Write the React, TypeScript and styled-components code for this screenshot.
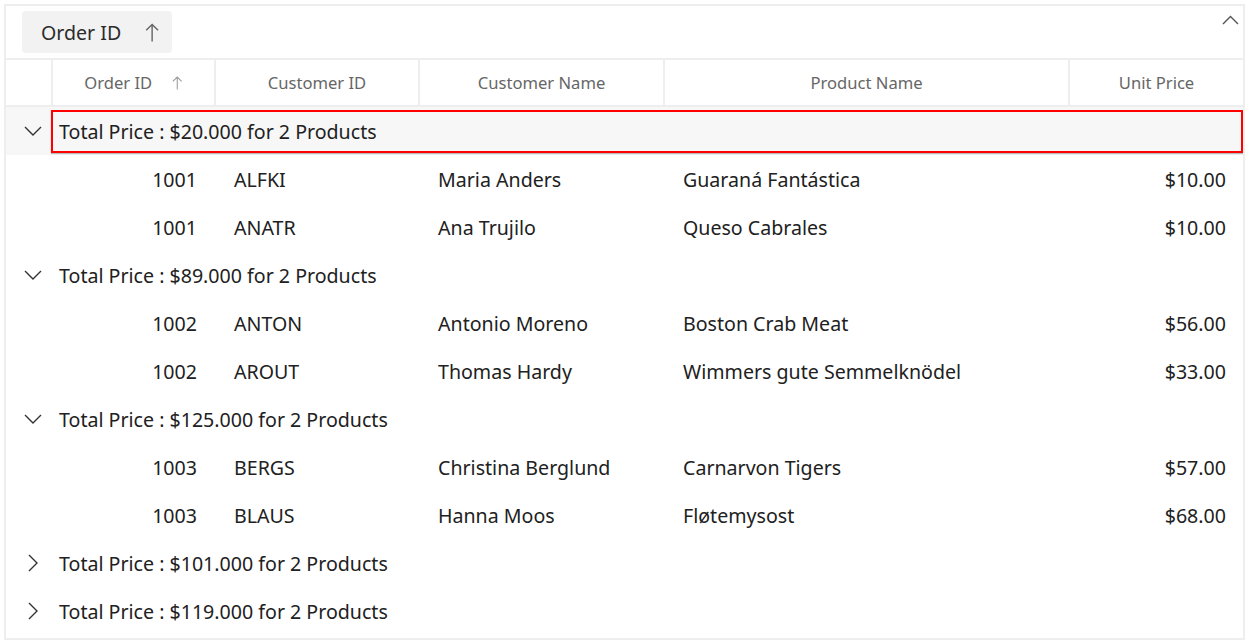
import React from "react";
import styled, { createGlobalStyle } from "styled-components";

const GlobalStyle = createGlobalStyle`
  html, body { margin: 0; padding: 0; background: #ffffff; }
  body { font-family: "Segoe UI", "Noto Sans", "Open Sans", sans-serif; }
`;

const COLS = "45px 163px 204px 245px 405px 175px";

const Grid = styled.div`
  margin: 4px 0 0 4px;
  width: 1241px;
  height: 636px;
  box-sizing: border-box;
  border: 2px solid #eeeeee;
  display: flex;
  flex-direction: column;
  overflow: hidden;
`;

const GroupDropArea = styled.div`
  height: 52px;
  border-bottom: 2px solid #eeeeee;
  display: flex;
  align-items: center;
  justify-content: space-between;
  padding: 0 3px 0 16px;
  box-sizing: content-box;
`;

const GroupChip = styled.div`
  display: flex;
  align-items: center;
  height: 42px;
  width: 150px;
  box-sizing: border-box;
  padding: 0 10px 0 19px;
  gap: 24px;
  background: #f2f2f2;
  border-radius: 4px;
  font-size: 19.6px;
  color: #2b2b2b;
`;

const CollapseButton = styled.div`
  align-self: flex-start;
  margin-top: 9px;
  width: 18px;
  height: 12px;
  display: flex;
`;

const HeaderRow = styled.div`
  display: grid;
  grid-template-columns: ${COLS};
  height: 45px;
  border-bottom: 2px solid #eeeeee;
`;

const HeaderCell = styled.div<{ $first?: boolean }>`
  display: flex;
  align-items: center;
  justify-content: center;
  gap: 20px;
  font-size: 16.6px;
  color: #666666;
  border-left: ${(p) => (p.$first ? "none" : "2px solid #eeeeee")};
`;

const Row = styled.div<{ $selected?: boolean }>`
  display: grid;
  grid-template-columns: ${COLS};
  height: 48px;
  background: ${(p) => (p.$selected ? "#f7f7f7" : "#ffffff")};
  font-size: 19.6px;
  color: #212121;
`;

const ExpanderCell = styled.div`
  display: flex;
  align-items: center;
  justify-content: center;
  padding-left: 8px;
`;

const Caption = styled.div<{ $focused?: boolean }>`
  grid-column: 2 / -1;
  position: relative;
  display: flex;
  align-items: center;
  padding-left: 8px;
  &::after {
    content: "";
    display: ${(p) => (p.$focused ? "block" : "none")};
    position: absolute;
    left: 0;
    right: 0;
    top: 3px;
    bottom: 2px;
    border: 2px solid #ff0000;
    box-shadow: 0 1px 1px rgba(0, 0, 0, 0.25);
  }
`;

const Cell = styled.div<{ $align?: "left" | "right" }>`
  display: flex;
  align-items: center;
  justify-content: ${(p) => (p.$align === "right" ? "flex-end" : "flex-start")};
  padding: 0 17px 0 20px;
  white-space: nowrap;
`;

const ArrowUp = ({ color, size }: { color: string; size: number }) => (
  <svg width={size * 0.75} height={size} viewBox="0 0 12 16" fill="none">
    <path d="M6 15.5V1.2M1 6.2L6 1.2L11 6.2" stroke={color} strokeWidth="1.2" />
  </svg>
);

const ChevronDown = () => (
  <svg width="18" height="10" viewBox="0 0 18 10" fill="none">
    <path d="M1 1L9 9L17 1" stroke="#333" strokeWidth="1.4" />
  </svg>
);

const ChevronRight = () => (
  <svg width="10" height="18" viewBox="0 0 10 18" fill="none">
    <path d="M1 1L9 9L1 17" stroke="#333" strokeWidth="1.4" />
  </svg>
);

const ChevronUp = () => (
  <svg width="17" height="10" viewBox="0 0 17 10" fill="none">
    <path d="M1 9L8.5 1.5L16 9" stroke="#555" strokeWidth="1.4" />
  </svg>
);

type Item = { id: number; cust: string; name: string; product: string; price: string };
type Group = { caption: string; expanded: boolean; items: Item[] };

const groups: Group[] = [
  {
    caption: "Total Price : $20.000 for 2 Products",
    expanded: true,
    items: [
      { id: 1001, cust: "ALFKI", name: "Maria Anders", product: "Guaraná Fantástica", price: "$10.00" },
      { id: 1001, cust: "ANATR", name: "Ana Trujilo", product: "Queso Cabrales", price: "$10.00" },
    ],
  },
  {
    caption: "Total Price : $89.000 for 2 Products",
    expanded: true,
    items: [
      { id: 1002, cust: "ANTON", name: "Antonio Moreno", product: "Boston Crab Meat", price: "$56.00" },
      { id: 1002, cust: "AROUT", name: "Thomas Hardy", product: "Wimmers gute Semmelknödel", price: "$33.00" },
    ],
  },
  {
    caption: "Total Price : $125.000 for 2 Products",
    expanded: true,
    items: [
      { id: 1003, cust: "BERGS", name: "Christina Berglund", product: "Carnarvon Tigers", price: "$57.00" },
      { id: 1003, cust: "BLAUS", name: "Hanna Moos", product: "Fløtemysost", price: "$68.00" },
    ],
  },
  { caption: "Total Price : $101.000 for 2 Products", expanded: false, items: [] },
  { caption: "Total Price : $119.000 for 2 Products", expanded: false, items: [] },
];

export default function App() {
  return (
    <>
      <GlobalStyle />
      <Grid>
        <GroupDropArea>
          <GroupChip>
            <span>Order ID</span>
            <ArrowUp color="#666" size={19} />
          </GroupChip>
          <CollapseButton>
            <ChevronUp />
          </CollapseButton>
        </GroupDropArea>
        <HeaderRow>
          <HeaderCell $first />
          <HeaderCell>
            <span>Order ID</span>
            <ArrowUp color="#9a9a9a" size={14} />
          </HeaderCell>
          <HeaderCell>Customer ID</HeaderCell>
          <HeaderCell>Customer Name</HeaderCell>
          <HeaderCell>Product Name</HeaderCell>
          <HeaderCell>Unit Price</HeaderCell>
        </HeaderRow>
        {groups.map((g, gi) => (
          <React.Fragment key={gi}>
            <Row $selected={gi === 0}>
              <ExpanderCell>{g.expanded ? <ChevronDown /> : <ChevronRight />}</ExpanderCell>
              <Caption $focused={gi === 0}>{g.caption}</Caption>
            </Row>
            {g.expanded &&
              g.items.map((it, ii) => (
                <Row key={ii}>
                  <div />
                  <Cell $align="right">{it.id}</Cell>
                  <Cell>{it.cust}</Cell>
                  <Cell>{it.name}</Cell>
                  <Cell>{it.product}</Cell>
                  <Cell $align="right">{it.price}</Cell>
                </Row>
              ))}
          </React.Fragment>
        ))}
      </Grid>
    </>
  );
}
